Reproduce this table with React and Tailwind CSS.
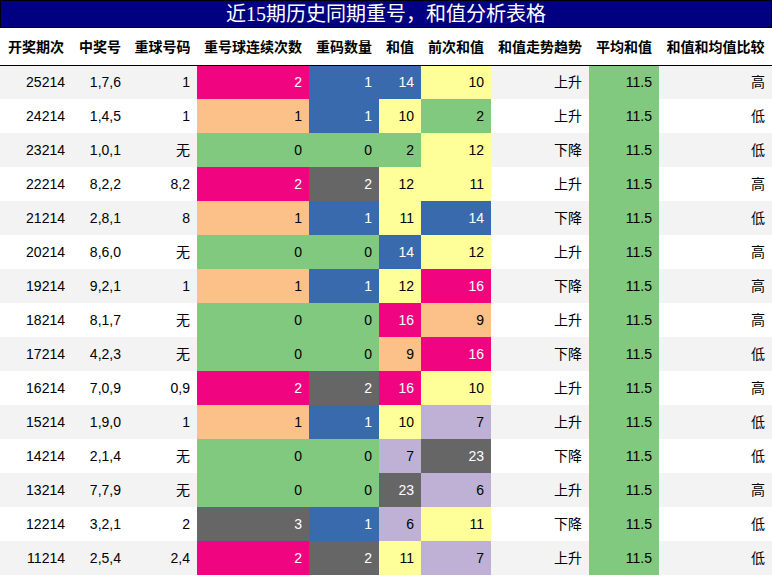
import React from 'react'

const widths = [72, 56, 69, 112, 70, 42, 70, 98, 70, 113]
const headers = ['开奖期次', '中奖号', '重球号码', '重号球连续次数', '重码数量', '和值', '前次和值', '和值走势趋势', '平均和值', '和值和均值比较']

// colour keys for the tinted cells
const tint = {
  p: 'bg-[#f0047f] text-white',
  b: 'bg-[#3a6aae] text-white',
  d: 'bg-[#666666] text-white',
  o: 'bg-[#fcc089] text-black',
  g: 'bg-[#80c97f] text-black',
  y: 'bg-[#ffff99] text-black',
  l: 'bg-[#bfb0d5] text-black',
}

const rows = [
  ['25214', '1,7,6', '1', [2, 'p'], [1, 'b'], [14, 'b'], [10, 'y'], '上升', '高'],
  ['24214', '1,4,5', '1', [1, 'o'], [1, 'b'], [10, 'y'], [2, 'g'], '上升', '低'],
  ['23214', '1,0,1', '无', [0, 'g'], [0, 'g'], [2, 'g'], [12, 'y'], '下降', '低'],
  ['22214', '8,2,2', '8,2', [2, 'p'], [2, 'd'], [12, 'y'], [11, 'y'], '上升', '高'],
  ['21214', '2,8,1', '8', [1, 'o'], [1, 'b'], [11, 'y'], [14, 'b'], '下降', '低'],
  ['20214', '8,6,0', '无', [0, 'g'], [0, 'g'], [14, 'b'], [12, 'y'], '上升', '高'],
  ['19214', '9,2,1', '1', [1, 'o'], [1, 'b'], [12, 'y'], [16, 'p'], '下降', '高'],
  ['18214', '8,1,7', '无', [0, 'g'], [0, 'g'], [16, 'p'], [9, 'o'], '上升', '高'],
  ['17214', '4,2,3', '无', [0, 'g'], [0, 'g'], [9, 'o'], [16, 'p'], '下降', '低'],
  ['16214', '7,0,9', '0,9', [2, 'p'], [2, 'd'], [16, 'p'], [10, 'y'], '上升', '高'],
  ['15214', '1,9,0', '1', [1, 'o'], [1, 'b'], [10, 'y'], [7, 'l'], '上升', '低'],
  ['14214', '2,1,4', '无', [0, 'g'], [0, 'g'], [7, 'l'], [23, 'd'], '下降', '低'],
  ['13214', '7,7,9', '无', [0, 'g'], [0, 'g'], [23, 'd'], [6, 'l'], '上升', '高'],
  ['12214', '3,2,1', '2', [3, 'd'], [1, 'b'], [6, 'l'], [11, 'y'], '下降', '低'],
  ['11214', '2,5,4', '2,4', [2, 'p'], [2, 'd'], [11, 'y'], [7, 'l'], '上升', '低'],
]

function Cell({ children, className = '' }) {
  return <td className={`h-[34px] p-0 pr-[7px] text-right align-middle ${className}`}>{children}</td>
}

export default function App() {
  return (
    <div className="w-[772px] h-[576px] overflow-hidden bg-white text-black" style={{ fontFamily: '"Liberation Sans", "Noto Sans CJK SC", sans-serif' }}>
      <div
        className="h-[28px] border border-black bg-[#000080] text-white text-[20px] leading-[26px] text-center"
        style={{ fontFamily: '"Liberation Serif", "Noto Sans CJK SC", serif' }}
      >
        近15期历史同期重号，和值分析表格
      </div>
      <table className="table-fixed border-collapse w-[772px] text-[14px]">
        <colgroup>
          {widths.map((w, i) => (
            <col key={i} style={{ width: w }} />
          ))}
        </colgroup>
        <thead>
          <tr className="border-b border-black">
            {headers.map((h) => (
              <th key={h} className="h-[37px] p-0 pt-px text-center font-bold whitespace-nowrap" style={{ fontFamily: '"Noto Sans CJK SC", sans-serif' }}>
                {h}
              </th>
            ))}
          </tr>
        </thead>
        <tbody>
          {rows.map((r, i) => (
            <tr key={r[0]} className={i % 2 === 0 ? 'bg-[#f3f3f3]' : 'bg-white'}>
              <Cell>{r[0]}</Cell>
              <Cell>{r[1]}</Cell>
              <Cell>{r[2]}</Cell>
              {[r[3], r[4], r[5], r[6]].map(([v, c], j) => (
                <Cell key={j} className={tint[c]}>{v}</Cell>
              ))}
              <Cell>{r[7]}</Cell>
              <Cell className={tint.g}>11.5</Cell>
              <Cell>{r[8]}</Cell>
            </tr>
          ))}
        </tbody>
      </table>
    </div>
  )
}
